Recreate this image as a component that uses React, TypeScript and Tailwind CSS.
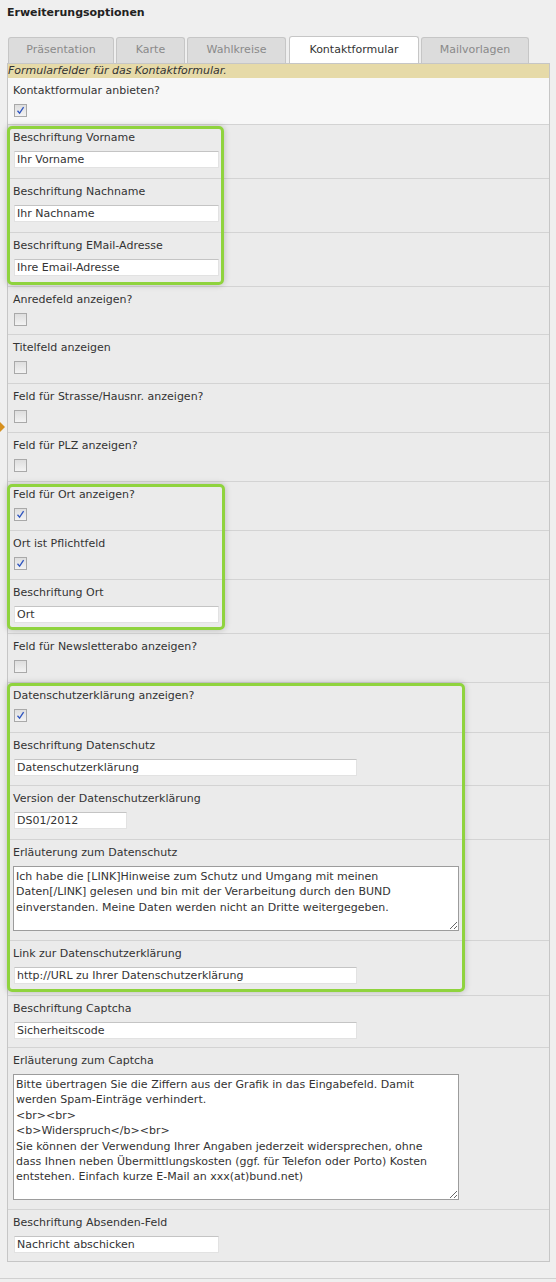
import React from "react";

const Check = ({ checked }: { checked?: boolean }) => (
  <span className="mt-[6px] ml-[1px] flex h-[13px] w-[13px] items-center justify-center border border-[#a9a9a9] bg-gradient-to-b from-[#dedede] to-[#f3f3f3]">
    {checked && (
      <svg width="9" height="9" viewBox="0 0 9 9">
        <path d="M1.5 4.8 L3.6 7.2 L7.6 1.2" fill="none" stroke="#2f55c0" strokeWidth="1.3" />
      </svg>
    )}
  </span>
);

const Field = ({ value, w }: { value: string; w: string }) => (
  <input
    readOnly
    value={value}
    className={`mt-[6px] ml-[1px] block h-[17px] ${w} border border-[#e2e2e2] border-t-[#c4c4c4] bg-white pl-[2px] text-[11px] leading-[15px] text-[#333] outline-none`}
  />
);

const Area = ({ value, h }: { value: string; h: string }) => (
  <textarea
    readOnly
    wrap="off"
    value={value}
    className={`mt-[6px] block w-[446px] ${h} overflow-hidden whitespace-pre border border-[#9c9c9c] bg-white px-[2px] pt-[2px] text-[11px] leading-[15.4px] text-[#333] outline-none`}
  />
);

const Row = ({ label, first, children, pb = "pb-[9px]" }: { label: string; first?: boolean; children: React.ReactNode; pb?: string }) => (
  <div className={`${first ? "bg-[#f7f7f7]" : "border-t border-[#d3d3d3]"} px-[5px] pt-[6px] ${pb}`}>
    <div className="h-[14px] text-[11px] leading-[14px] text-[#333]">{label}</div>
    {children}
  </div>
);

const Green = ({ pos }: { pos: string }) => (
  <div className={`pointer-events-none absolute ${pos} rounded-[5px] border-[3px] border-[#8fd33e] shadow-[0_0_6px_rgba(0,0,0,0.22)]`} />
);

const tabs = [
  { t: "Präsentation", cls: "ml-[8px] w-[106px]" },
  { t: "Karte", cls: "ml-[2px] w-[69px]" },
  { t: "Wahlkreise", cls: "ml-[2px] w-[99px]" },
  { t: "Kontaktformular", cls: "ml-[3px] w-[130px]", active: true },
  { t: "Mailvorlagen", cls: "ml-[2px] w-[108px]" },
];

const datenschutz =
  "Ich habe die [LINK]Hinweise zum Schutz und Umgang mit meinen\nDaten[/LINK] gelesen und bin mit der Verarbeitung durch den BUND\neinverstanden. Meine Daten werden nicht an Dritte weitergegeben.";

const captcha =
  "Bitte übertragen Sie die Ziffern aus der Grafik in das Eingabefeld. Damit\nwerden Spam-Einträge verhindert.\n<br><br>\n<b>Widerspruch</b><br>\nSie können der Verwendung Ihrer Angaben jederzeit widersprechen, ohne\ndass Ihnen neben Übermittlungskosten (ggf. für Telefon oder Porto) Kosten\nentstehen. Einfach kurze E-Mail an xxx(at)bund.net)";

export default function App() {
  return (
    <div className="relative min-h-[1282px] w-[556px] bg-[#efefef] pt-[6px] font-['DejaVu_Sans',Verdana,sans-serif] text-[#333]">
      <div className="pl-[7px] text-[11px] font-bold leading-[14px] text-[#222]">Erweiterungsoptionen</div>

      <div className="mt-[16px] flex h-[27px] items-end">
        {tabs.map((tab) => (
          <div
            key={tab.t}
            className={`${tab.cls} flex h-[26px] items-center justify-center rounded-t-[3px] border border-b-0 text-[11px] ${
              tab.active ? "relative z-10 h-[27px] border-[#c6c6c6] bg-white text-[#333]" : "border-[#c6c6c6] bg-[#dcdcdc] text-[#8a8a8a]"
            }`}
          >
            {tab.t}
          </div>
        ))}
      </div>

      <div className="ml-[7px] w-[543px] border border-[#c6c6c6] bg-[#ebebeb]">
        <div className="h-[14px] bg-[#e6daa8] text-[11px] italic leading-[14px] text-[#333]">Formularfelder für das Kontaktformular.</div>

        <Row label="Kontaktformular anbieten?" first pb="pb-[7px]">
          <Check checked />
        </Row>

        <div className="relative">
          <Row label="Beschriftung Vorname" pb="pb-[10px]">
            <Field value="Ihr Vorname" w="w-[205px]" />
          </Row>
          <Row label="Beschriftung Nachname" pb="pb-[10px]">
            <Field value="Ihr Nachname" w="w-[205px]" />
          </Row>
          <Row label="Beschriftung EMail-Adresse" pb="pb-[10px]">
            <Field value="Ihre Email-Adresse" w="w-[205px]" />
          </Row>
          <Green pos="-left-[1px] top-[2px] bottom-[1px] w-[217px]" />
        </div>

        <Row label="Anredefeld anzeigen?" pb="pb-[8px]">
          <Check />
        </Row>
        <Row label="Titelfeld anzeigen">
          <Check />
        </Row>
        <Row label="Feld für Strasse/Hausnr. anzeigen?">
          <Check />
        </Row>
        <Row label="Feld für PLZ anzeigen?">
          <Check />
        </Row>

        <div className="relative">
          <Row label="Feld für Ort anzeigen?">
            <Check checked />
          </Row>
          <Row label="Ort ist Pflichtfeld">
            <Check checked />
          </Row>
          <Row label="Beschriftung Ort" pb="pb-[10px]">
            <Field value="Ort" w="w-[205px]" />
          </Row>
          <Green pos="-left-[1px] top-[3px] bottom-[3px] w-[218px]" />
        </div>

        <Row label="Feld für Newsletterabo anzeigen?">
          <Check />
        </Row>

        <div className="relative">
          <Row label="Datenschutzerklärung anzeigen?" pb="pb-[10px]">
            <Check checked />
          </Row>
          <Row label="Beschriftung Datenschutz" pb="pb-[9px]">
            <Field value="Datenschutzerklärung" w="w-[343px]" />
          </Row>
          <Row label="Version der Datenschutzerklärung" pb="pb-[10px]">
            <Field value="DS01/2012" w="w-[113px]" />
          </Row>
          <Row label="Erläuterung zum Datenschutz" pb="pb-[9px]">
            <Area value={datenschutz} h="h-[65px]" />
          </Row>
          <Row label="Link zur Datenschutzerklärung" pb="pb-[11px]">
            <Field value="http://URL zu Ihrer Datenschutzerklärung" w="w-[343px]" />
          </Row>
          <Green pos="-left-[1px] top-[1px] bottom-[3px] w-[458px]" />
        </div>

        <Row label="Beschriftung Captcha" pb="pb-[8px]">
          <Field value="Sicherheitscode" w="w-[343px]" />
        </Row>
        <Row label="Erläuterung zum Captcha" pb="pb-[9px]">
          <Area value={captcha} h="h-[126px]" />
        </Row>
        <Row label="Beschriftung Absenden-Feld" pb="pb-[8px]">
          <Field value="Nachricht abschicken" w="w-[205px]" />
        </Row>
      </div>

      <div className="mt-[16px] border-t border-[#d0d0d0]" />

      <div className="absolute left-0 top-[422px] h-0 w-0 border-y-[5px] border-l-[5px] border-y-transparent border-l-[#d6901f]" />
    </div>
  );
}
